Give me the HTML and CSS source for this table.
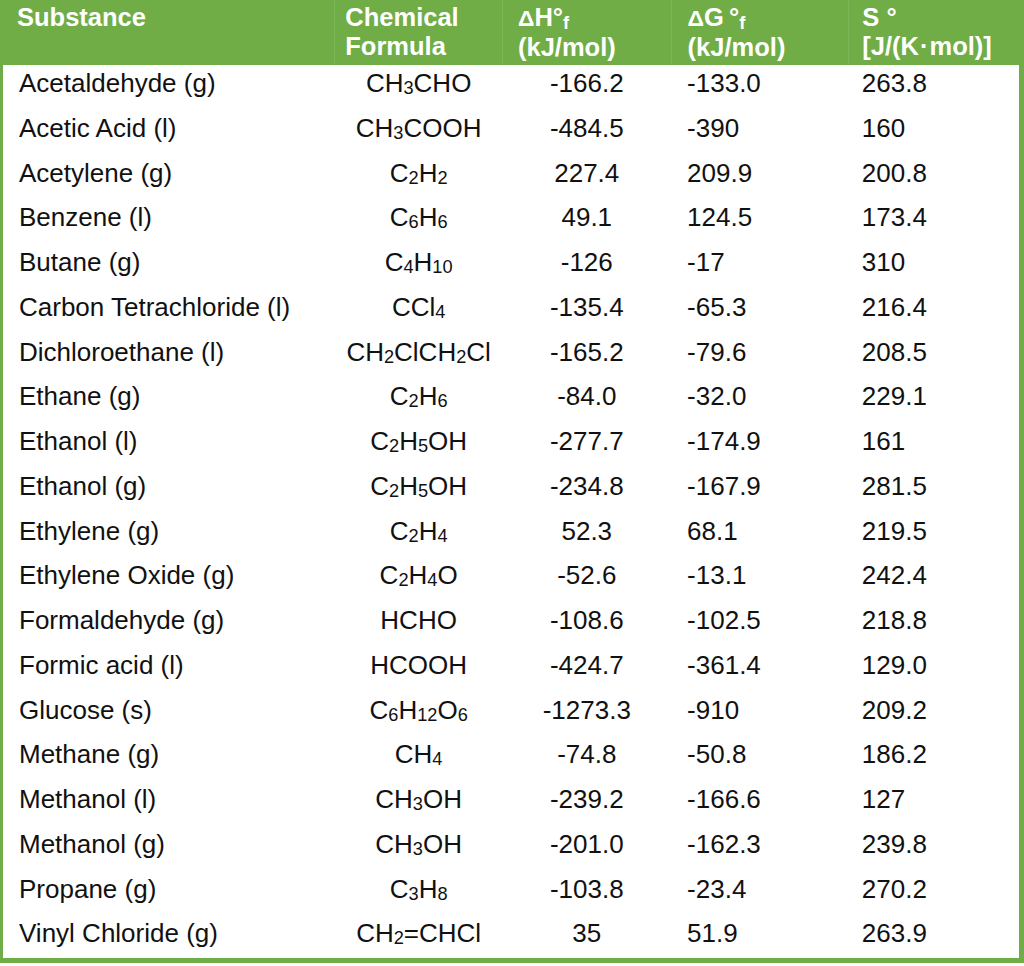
FILE: index.html
```html
<!DOCTYPE html>
<html>
<head>
<meta charset="utf-8">
<link rel="stylesheet" href="styles.css">
</head>
<body>
<table class="thermo">
  <colgroup>
    <col class="c-name"><col class="c-formula"><col class="c-dh"><col class="c-dg"><col class="c-s">
  </colgroup>
  <thead>
    <tr>
      <th class="first">Substance</th>
      <th>Chemical<br>Formula</th>
      <th><span class="delta">Δ</span>H°<sub>f</sub><br>(kJ/mol)</th>
      <th><span class="delta">Δ</span>G&thinsp;°<sub>f</sub><br>(kJ/mol)</th>
      <th class="last">S&nbsp;°<br>[J/(K<span class="dot">·</span>mol)]</th>
    </tr>
  </thead>
  <tbody>
    <tr><td>Acetaldehyde (g)</td><td class="ctr">CH<sub>3</sub>CHO</td><td class="ctr">-166.2</td><td>-133.0</td><td>263.8</td></tr>
    <tr><td>Acetic Acid (l)</td><td class="ctr">CH<sub>3</sub>COOH</td><td class="ctr">-484.5</td><td>-390</td><td>160</td></tr>
    <tr><td>Acetylene (g)</td><td class="ctr">C<sub>2</sub>H<sub>2</sub></td><td class="ctr">227.4</td><td>209.9</td><td>200.8</td></tr>
    <tr><td>Benzene (l)</td><td class="ctr">C<sub>6</sub>H<sub>6</sub></td><td class="ctr">49.1</td><td>124.5</td><td>173.4</td></tr>
    <tr><td>Butane (g)</td><td class="ctr">C<sub>4</sub>H<sub>10</sub></td><td class="ctr">-126</td><td>-17</td><td>310</td></tr>
    <tr><td>Carbon Tetrachloride (l)</td><td class="ctr">CCl<sub>4</sub></td><td class="ctr">-135.4</td><td>-65.3</td><td>216.4</td></tr>
    <tr><td>Dichloroethane (l)</td><td class="ctr">CH<sub>2</sub>ClCH<sub>2</sub>Cl</td><td class="ctr">-165.2</td><td>-79.6</td><td>208.5</td></tr>
    <tr><td>Ethane (g)</td><td class="ctr">C<sub>2</sub>H<sub>6</sub></td><td class="ctr">-84.0</td><td>-32.0</td><td>229.1</td></tr>
    <tr><td>Ethanol (l)</td><td class="ctr">C<sub>2</sub>H<sub>5</sub>OH</td><td class="ctr">-277.7</td><td>-174.9</td><td>161</td></tr>
    <tr><td>Ethanol (g)</td><td class="ctr">C<sub>2</sub>H<sub>5</sub>OH</td><td class="ctr">-234.8</td><td>-167.9</td><td>281.5</td></tr>
    <tr><td>Ethylene (g)</td><td class="ctr">C<sub>2</sub>H<sub>4</sub></td><td class="ctr">52.3</td><td>68.1</td><td>219.5</td></tr>
    <tr><td>Ethylene Oxide (g)</td><td class="ctr">C<sub>2</sub>H<sub>4</sub>O</td><td class="ctr">-52.6</td><td>-13.1</td><td>242.4</td></tr>
    <tr><td>Formaldehyde (g)</td><td class="ctr">HCHO</td><td class="ctr">-108.6</td><td>-102.5</td><td>218.8</td></tr>
    <tr><td>Formic acid (l)</td><td class="ctr">HCOOH</td><td class="ctr">-424.7</td><td>-361.4</td><td>129.0</td></tr>
    <tr><td>Glucose (s)</td><td class="ctr">C<sub>6</sub>H<sub>12</sub>O<sub>6</sub></td><td class="ctr">-1273.3</td><td>-910</td><td>209.2</td></tr>
    <tr><td>Methane (g)</td><td class="ctr">CH<sub>4</sub></td><td class="ctr">-74.8</td><td>-50.8</td><td>186.2</td></tr>
    <tr><td>Methanol (l)</td><td class="ctr">CH<sub>3</sub>OH</td><td class="ctr">-239.2</td><td>-166.6</td><td>127</td></tr>
    <tr><td>Methanol (g)</td><td class="ctr">CH<sub>3</sub>OH</td><td class="ctr">-201.0</td><td>-162.3</td><td>239.8</td></tr>
    <tr><td>Propane (g)</td><td class="ctr">C<sub>3</sub>H<sub>8</sub></td><td class="ctr">-103.8</td><td>-23.4</td><td>270.2</td></tr>
    <tr><td>Vinyl Chloride (g)</td><td class="ctr">CH<sub>2</sub>=CHCl</td><td class="ctr">35</td><td>51.9</td><td>263.9</td></tr>
  </tbody>
</table>
</body>
</html>
```

FILE: styles.css
```css
html, body {
  margin: 0;
  padding: 0;
  background: #ffffff;
}

.thermo {
  width: 1024px;
  table-layout: fixed;
  border-collapse: collapse;
  border-left: 3px solid #70ad47;
  border-right: 5px solid #70ad47;
  border-bottom: 5px solid #70ad47;
  font-family: "Liberation Sans", Arial, sans-serif;
  font-size: 26px;
  color: #111111;
}

.c-name { width: 332px; }
.c-formula { width: 167px; }
.c-dh { width: 168px; }
.c-dg { width: 177px; }
.c-s { width: 172px; }

.thermo th {
  background: #70ad47;
  color: #ffffff;
  font-size: 25.5px;
  font-weight: bold;
  text-align: left;
  vertical-align: top;
  height: 65px;
  box-sizing: border-box;
  padding: 3px 0 0 15px;
  line-height: 29px;
  border-right: 1px solid rgba(255, 255, 255, 0.1);
}

.thermo th.first {
  border-left: 1px solid #f4f9f0;
  padding-left: 14px;
}

.thermo th:nth-child(2) { padding-left: 10px; }
.thermo th:nth-child(4) { padding-left: 16px; }
.thermo th.last { padding-left: 13px; border-right: none; }

.thermo th .delta {
  font-size: 0.9em;
}

.thermo th sub {
  font-size: 0.72em;
  vertical-align: -0.18em;
  line-height: 0;
}

.thermo th .dot {
  padding: 0 1px;
}

.thermo td {
  height: 44.75px;
  box-sizing: border-box;
  padding: 4px 0 0 16px;
  line-height: 28px;
  vertical-align: top;
  white-space: nowrap;
}

.thermo td.ctr {
  text-align: center;
  padding-left: 0;
}

.thermo td:first-child { padding-left: 16px; }
.thermo td:nth-child(4) { padding-left: 16px; }
.thermo td:nth-child(5) { padding-left: 13px; }

.thermo td sub {
  font-size: 0.7em;
  vertical-align: -0.12em;
  line-height: 0;
}
```
